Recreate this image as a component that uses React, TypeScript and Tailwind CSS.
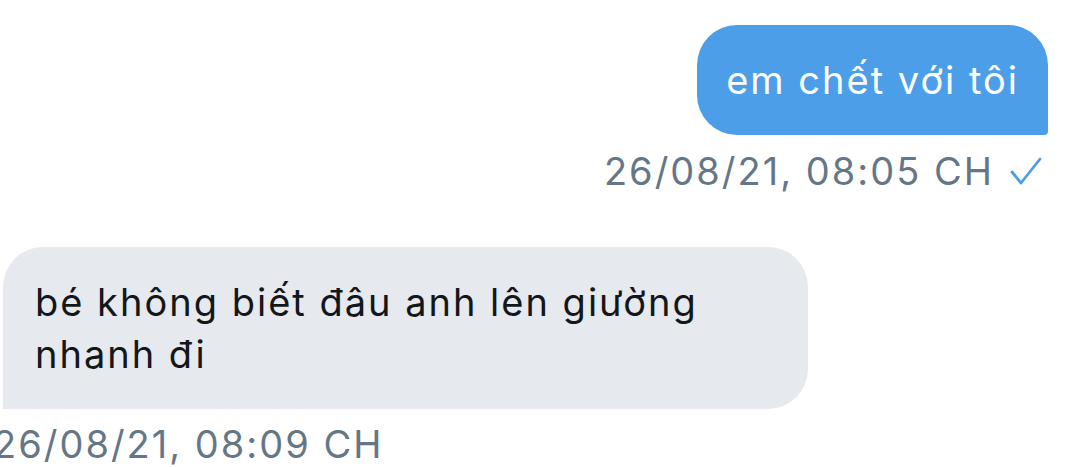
import React from "react";

export default function App() {
  return (
    <div
      className="w-[1084px] h-[467px] bg-white overflow-hidden relative"
      style={{ fontFamily: "Inter, 'Liberation Sans', sans-serif" }}
    >
      <div className="flex flex-col items-end pr-[36px] pt-[25px]">
        <div className="h-[110px] flex items-center px-[29px] bg-[#4d9ee9] text-white text-[38px] rounded-[40px] rounded-br-[4px] tracking-[2px]">
          em chết với tôi
        </div>
        <div className="mt-[14px] mr-[6px] flex items-center gap-[16px] text-[38px] tracking-[2px] text-[#657786] leading-[44px]">
          <span>26/08/21, 08:05 CH</span>
          <svg width="32" height="30" viewBox="0 0 32 30" fill="none">
            <path d="M2 16 L11 27 L30 3" stroke="#4d9ee9" strokeWidth="2.8" strokeLinecap="round" strokeLinejoin="round" />
          </svg>
        </div>
      </div>
      <div className="flex flex-col items-start pl-[3px] mt-[54px]">
        <div className="w-[805px] pl-[32px] pr-[30px] py-[29px] bg-[#e6e9ee] text-[#14171a] text-[38px] tracking-[2px] leading-[52px] rounded-[40px] rounded-bl-none">
          bé không biết đâu anh lên giường nhanh đi
        </div>
        <div className="ml-[-10px] mt-[13px] text-[38px] tracking-[2px] text-[#657786] leading-[44px] whitespace-nowrap">
          26/08/21, 08:09 CH
        </div>
      </div>
    </div>
  );
}
